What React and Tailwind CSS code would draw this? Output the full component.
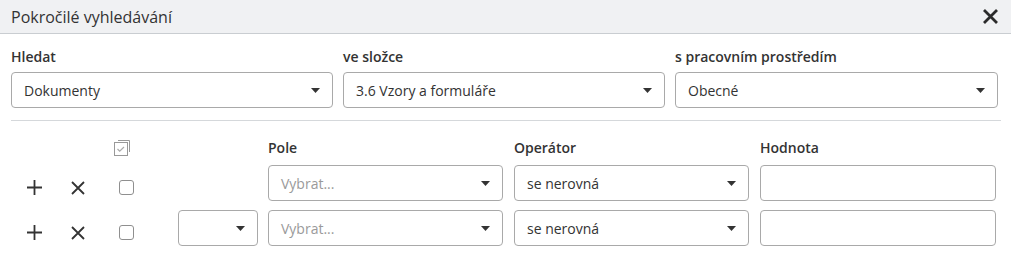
import React from 'react';

const font = { fontFamily: '"Open Sans", "Noto Sans", sans-serif' };

function Caret() {
  return (
    <svg width="9" height="5" viewBox="0 0 9 5" className="shrink-0">
      <path d="M0 0h9L4.5 5z" fill="#333" />
    </svg>
  );
}

function Select({ value, placeholder, className = '' }) {
  return (
    <div className={`flex items-center justify-between h-[36px] border border-[#a9a9a9] rounded-[4px] bg-white pl-[12px] pr-[12px] ${className}`}>
      {value ? (
        <span className="text-[14px] text-[#333]">{value}</span>
      ) : (
        <span className="text-[14px] text-[#9a9a9a]">{placeholder}</span>
      )}
      <Caret />
    </div>
  );
}

function PlusIcon() {
  return (
    <svg width="15" height="15" viewBox="0 0 15 15">
      <path d="M7.5 0v15M0 7.5h15" stroke="#333" strokeWidth="1.8" />
    </svg>
  );
}

function CrossIcon() {
  return (
    <svg width="14" height="14" viewBox="0 0 14 14">
      <path d="M1 1l12 12M13 1L1 13" stroke="#333" strokeWidth="1.8" />
    </svg>
  );
}

function Row({ withJoin }) {
  return (
    <div className="flex items-center gap-[10px]">
      <div className="w-[157px] flex items-center h-[36px] pt-[9px]">
        <div className="ml-[16px] flex"><PlusIcon /></div>
        <div className="ml-[29px] flex"><CrossIcon /></div>
        <div className="ml-[34px] w-[15px] h-[15px] border border-[#8f8f8f] rounded-[3px] bg-white" />
      </div>
      <div className="w-[80px]">
        {withJoin && <Select className="w-[80px]" />}
      </div>
      <Select placeholder="Vybrat..." className="w-[235px]" />
      <Select value="se nerovná" className="w-[235px] ml-px" />
      <div className="w-[236px] h-[36px] border border-[#a9a9a9] rounded-[4px] bg-white ml-px" />
    </div>
  );
}

export default function App() {
  return (
    <div className="w-[1011px] h-[258px] bg-white text-[#333]" style={font}>
      <div className="h-[34px] bg-[#f0f1f3] border-b border-[#c9cdd1] flex items-center justify-between pl-[11px] pr-[12px]">
        <span className="text-[16px] text-[#333]">Pokročilé vyhledávání</span>
        <svg width="17" height="17" viewBox="0 0 17 17">
          <path d="M2 2l13 13M15 2L2 15" stroke="#2b2b2b" strokeWidth="2.8" />
        </svg>
      </div>

      <div className="px-[11px]">
        <div className="grid grid-cols-[322px_322px_323px] gap-[10px] pt-[14px]">
          {[
            ['Hledat', 'Dokumenty'],
            ['ve složce', '3.6 Vzory a formuláře'],
            ['s pracovním prostředím', 'Obecné'],
          ].map(([label, value]) => (
            <div key={label}>
              <div className="text-[14px] font-semibold leading-[18px] mb-[6px]">{label}</div>
              <Select value={value} />
            </div>
          ))}
        </div>

        <div className="mt-[12px] border-t border-[#d5d8db] mr-[-1px]" />

        <div className="flex items-center gap-[10px] h-[44px] pt-[8px]">
          <div className="w-[157px] h-[20px] flex items-center">
            <svg width="17" height="17" viewBox="0 0 17 17" className="ml-[103px]">
              <path d="M4 1.5h11.5v11.5" fill="none" stroke="#999" strokeWidth="1" />
              <rect x="0.5" y="3.5" width="13" height="13" fill="#fff" stroke="#999" strokeWidth="1" />
              <path d="M3.5 10l2.2 2.2L10 8" fill="none" stroke="#aaa" strokeWidth="1.2" />
            </svg>
          </div>
          <div className="w-[80px]" />
          <div className="w-[235px] text-[14px] font-semibold">Pole</div>
          <div className="w-[235px] ml-px text-[14px] font-semibold">Operátor</div>
          <div className="w-[236px] ml-px text-[14px] font-semibold">Hodnota</div>
        </div>

        <div className="flex flex-col gap-[9px]">
          <Row />
          <Row withJoin />
        </div>
      </div>
    </div>
  );
}
